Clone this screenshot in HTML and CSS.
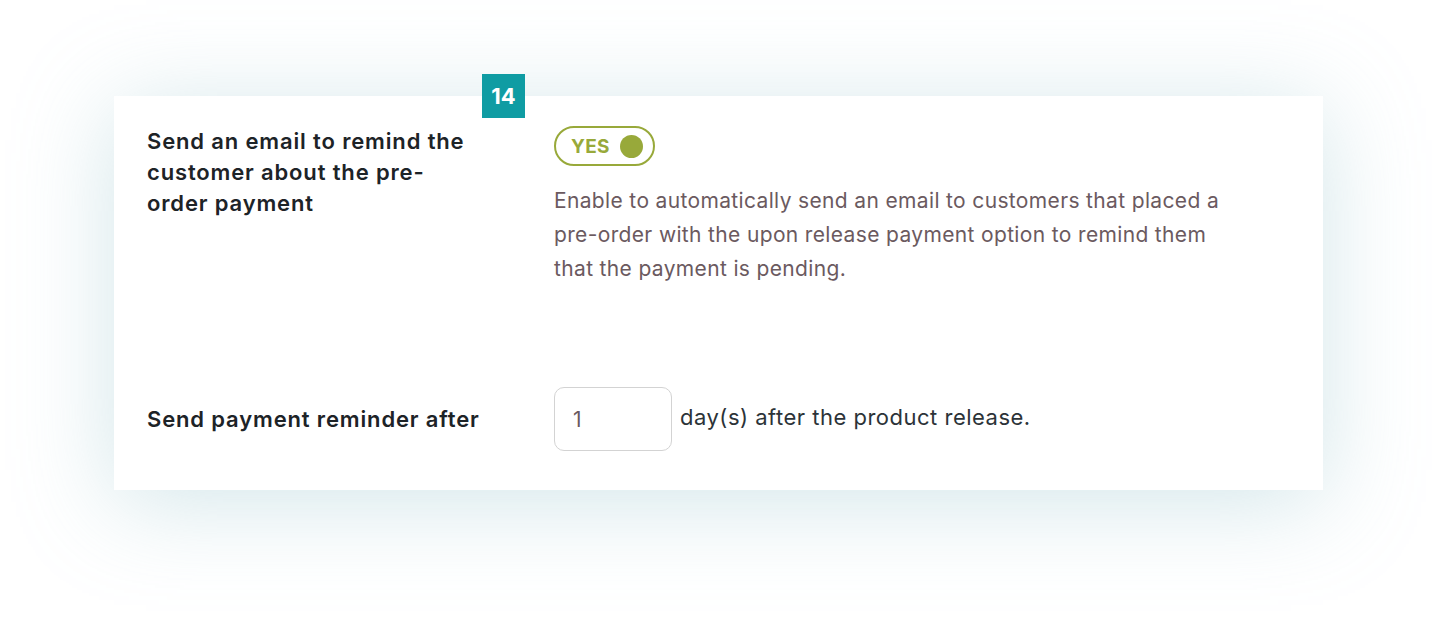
FILE: index.html
```html
<!DOCTYPE html>
<html lang="en">
<head>
    <meta charset="UTF-8">
    <meta name="viewport" content="width=device-width, initial-scale=1.0">
    <title>Pre-order payment reminder</title>
    <link rel="stylesheet" href="styles.css">
</head>
<body>
    <div class="panel">
        <span class="step-badge">14</span>

        <div class="option-row">
            <label class="option-label">Send an email to remind the customer about the pre-order payment</label>
            <div class="option-field">
                <button class="toggle is-on" type="button">
                    <span class="toggle-text">YES</span>
                    <span class="toggle-knob"></span>
                </button>
                <p class="option-desc">Enable to automatically send an email to customers that placed a pre-order with the upon release payment option to remind them that the payment is pending.</p>
            </div>
        </div>

        <div class="option-row option-row-inline">
            <label class="option-label">Send payment reminder after</label>
            <div class="option-field inline-field">
                <input type="text" class="days-input" value="1">
                <span class="inline-text">day(s) after the product release.</span>
            </div>
        </div>
    </div>
</body>
</html>
```

FILE: styles.css
```css
body {
    margin: 0;
    padding: 96px 121px 140px 114px;
    background-color: #ffffff;
    font-family: Inter, "Open Sans", Arial, sans-serif;
}

.panel {
    position: relative;
    background-color: #ffffff;
    padding: 30px 33px 39px 33px;
    box-shadow: 0 12px 90px rgba(150, 195, 205, 0.42);
}

.step-badge {
    position: absolute;
    top: -22px;
    left: 368px;
    width: 43px;
    height: 44px;
    background-color: #0f9ca3;
    color: #ffffff;
    font-size: 22px;
    font-weight: 700;
    line-height: 44px;
    text-align: center;
}

.option-row {
    display: grid;
    grid-template-columns: 407px 1fr;
}

.option-row-inline {
    margin-top: 101px;
    align-items: center;
}

.option-label {
    font-size: 22px;
    font-weight: 600;
    line-height: 31px;
    letter-spacing: 0.85px;
    color: #1d2327;
    max-width: 325px;
}

.option-row-inline .option-label {
    max-width: none;
    white-space: nowrap;
}

.toggle {
    display: flex;
    align-items: center;
    gap: 10px;
    width: 101px;
    height: 40px;
    padding: 0 12px 0 15px;
    border: 2px solid #98a93a;
    border-radius: 20px;
    background-color: #ffffff;
    box-sizing: border-box;
    cursor: pointer;
}

.toggle-text {
    font-family: Inter, Arial, sans-serif;
    font-size: 19px;
    font-weight: 700;
    color: #98a93a;
    letter-spacing: 0.3px;
}

.toggle-knob {
    flex-shrink: 0;
    width: 23px;
    height: 23px;
    border-radius: 50%;
    background-color: #98a93a;
}

.option-desc {
    margin: 18px 0 0 0;
    max-width: 680px;
    font-size: 21px;
    line-height: 34px;
    letter-spacing: 0.35px;
    color: #6b5a5f;
}

.inline-field {
    display: flex;
    align-items: center;
    gap: 8px;
}

.days-input {
    width: 118px;
    height: 64px;
    box-sizing: border-box;
    padding: 0 18px;
    border: 1px solid #d3d3d3;
    border-radius: 10px;
    font-family: Inter, Arial, sans-serif;
    font-size: 21px;
    color: #6b5a5f;
    outline: none;
}

.inline-text {
    font-size: 22px;
    letter-spacing: 0.5px;
    color: #2c3338;
    margin-top: -4px;
}
```
